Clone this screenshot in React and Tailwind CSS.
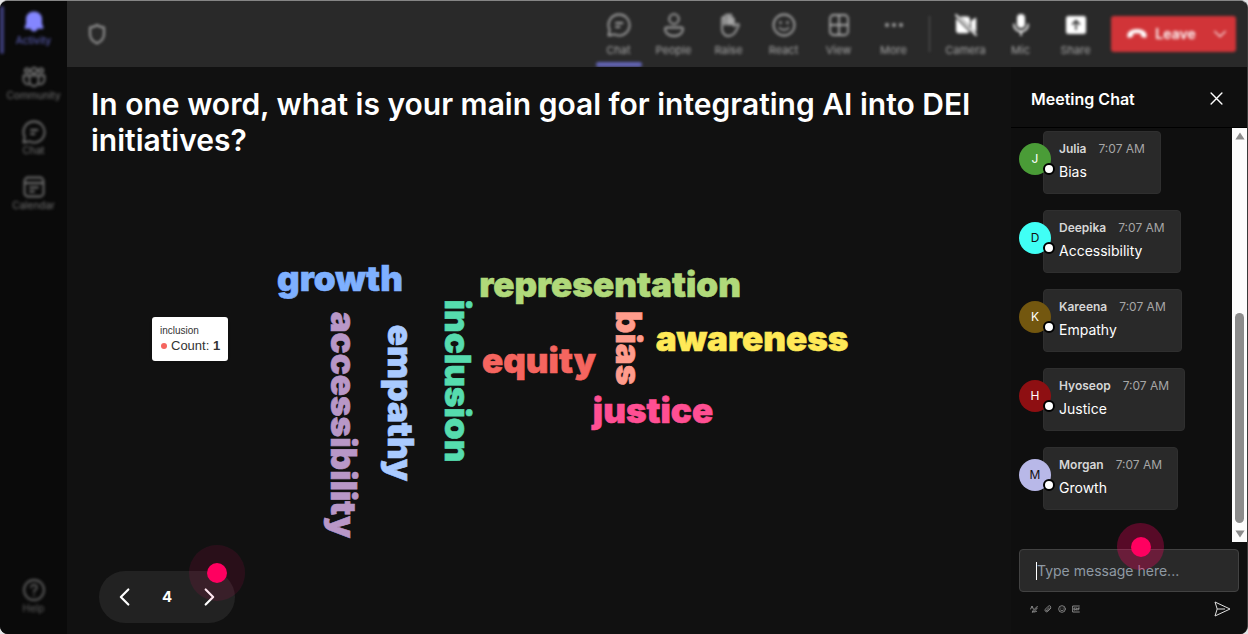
import React from "react";

function Icon({ size = "size-6", label, children }) {
  return (
    <svg
      viewBox="0 0 24 24"
      className={`${size} shrink-0`}
      fill="none"
      stroke="currentColor"
      strokeWidth="1.8"
      strokeLinecap="round"
      strokeLinejoin="round"
      aria-hidden={label ? undefined : true}
      aria-label={label}
    >
      {children}
    </svg>
  );
}

const BellIcon = () => (
  <Icon>
    <path
      fill="currentColor"
      stroke="none"
      d="M12 1.5c-4.600 0-8 3.300-8 7.600v4.600l-1.400 3.500c-.3.8.2 1.500 1 1.500h4.900a3.600 3.600 0 0 0 7 0h4.900c.8 0 1.300-.7 1-1.500L20 13.700V9.100c0-4.300-3.400-7.600-8-7.600z"
    />
  </Icon>
);

const CommunityIcon = () => (
  <Icon>
    <circle cx="12" cy="5.500" r="2.800" />
    <circle cx="5" cy="5.500" r="2.200" />
    <circle cx="19" cy="5.500" r="2.200" />
    <path d="M7.500 10.500h9v6a4.500 4.500 0 0 1-9 0z" />
    <path d="M7 10.500H1.500V15a4.500 4.500 0 0 0 6 4M17 10.500h5.500V15a4.500 4.500 0 0 1-6 4" />
  </Icon>
);

const ChatIcon = () => (
  <Icon>
    <path d="M12 1.500a10.500 10.500 0 1 1-4.800 19.800L1.500 22.500l1.200-5.600A10.500 10.500 0 0 1 12 1.500z" />
    <path d="M9 10h6.500M9 14h3.500" />
  </Icon>
);

const CalendarIcon = () => (
  <Icon>
    <rect x="2.500" y="2.500" width="19" height="19" rx="3.500" />
    <path d="M3 8h18M8 12.500h8M8 16.500h4" />
  </Icon>
);

const HelpIcon = () => (
  <Icon>
    <circle cx="12" cy="12" r="10" />
    <path d="M9.200 9.300a2.800 2.800 0 1 1 4.200 2.500c-.9.600-1.400 1.100-1.400 2.200M12 17.200v.1" />
  </Icon>
);

const PeopleIcon = () => (
  <Icon>
    <circle cx="12" cy="6" r="4.800" />
    <path d="M4.500 14.500h15A1.500 1.500 0 0 1 21 16c0 4-3.500 7-9 7s-9-3-9-7a1.500 1.500 0 0 1 1.500-1.500z" />
  </Icon>
);

const HandIcon = () => (
  <Icon>
    <path d="M5 13V5.500a1.500 1.500 0 0 1 3 0V3.500a1.500 1.500 0 0 1 3.500 0V3a1.500 1.500 0 0 1 3 0v2.500a1.500 1.500 0 0 1 2.500 1V13l3-1.800c1-.6 2.300.4 1.700 1.500C19.500 17 17.500 23 11.500 23 7.500 23 5 19.500 5 16z" />
    <path d="M8 5v6M11.500 4v7M14.500 5v6" strokeWidth="3" />
  </Icon>
);

const ReactIcon = () => (
  <Icon>
    <circle cx="12" cy="12" r="10.500" />
    <path d="M8.500 9.500v.2M15.500 9.500v.2" strokeWidth="2.600" />
    <path d="M7.500 15c2.200 2.400 6.800 2.400 9 0" />
  </Icon>
);

const ViewIcon = () => (
  <Icon>
    <rect x="3" y="2" width="18" height="20" rx="3.500" />
    <path d="M12 2v20M3 12h18" />
  </Icon>
);

const MoreIcon = () => (
  <Icon>
    <g fill="currentColor" stroke="none">
      <circle cx="5" cy="12" r="2" />
      <circle cx="12" cy="12" r="2" />
      <circle cx="19" cy="12" r="2" />
    </g>
  </Icon>
);

const CameraOffIcon = () => (
  <Icon>
    <path
      fill="currentColor"
      stroke="none"
      d="M5.800 3.500H13a3 3 0 0 1 3 3v7.200L5.800 3.500zM2 5.300 15.500 18.800c-.6.900-1.500 1.400-2.500 1.400H5a3 3 0 0 1-3-3zM17 8l4-3c.5-.4 1.200 0 1.200.6v12.800c0 .5-.5.8-1 .6L17 15z"
    />
    <path d="m2 2 20 20" />
  </Icon>
);

const MicIcon = () => (
  <Icon>
    <rect x="8" y="1" width="8" height="14" rx="4" fill="currentColor" stroke="none" />
    <path d="M5 11.500a7 7 0 0 0 14 0M12 18.500V22" />
  </Icon>
);

const ShareIcon = () => (
  <Icon>
    <path
      fillRule="evenodd"
      fill="currentColor"
      stroke="none"
      d="M4.500 3h15A2.500 2.500 0 0 1 22 5.500v13a2.500 2.500 0 0 1-2.500 2.500h-15A2.500 2.500 0 0 1 2 18.500v-13A2.500 2.500 0 0 1 4.500 3zM12 6.500 7.500 11l1.200 1.200L11.200 9.800V17h1.600V9.800l2.500 2.400 1.200-1.200z"
    />
  </Icon>
);

const sideItems = [
  { label: "Activity", icon: BellIcon, active: true },
  { label: "Community", icon: CommunityIcon },
  { label: "Chat", icon: ChatIcon },
  { label: "Calendar", icon: CalendarIcon },
];

const tools = [
  { label: "Chat", icon: ChatIcon, active: true },
  { label: "People", icon: PeopleIcon },
  { label: "Raise", icon: HandIcon },
  { label: "React", icon: ReactIcon },
  { label: "View", icon: ViewIcon },
  { label: "More", icon: MoreIcon },
];

const devices = [
  { label: "Camera", icon: CameraOffIcon },
  { label: "Mic", icon: MicIcon },
  { label: "Share", icon: ShareIcon },
];

function SideButton({ label, icon: Glyph, active }) {
  return (
    <button
      type="button"
      className={`flex h-[55px] w-full flex-col items-center text-[10px] leading-[12px] ${
        active ? "text-[#6266c4]" : "text-[#747474]"
      }`}
    >
      <span className={active ? "text-[#8486ff]" : ""}>
        <Glyph />
      </span>
      {label}
    </button>
  );
}

function ToolButton({ label, icon: Glyph, active, bright }) {
  return (
    <button
      type="button"
      className="flex h-full w-[55px] flex-col items-center pt-3 text-[11px] leading-[14px] text-[#a6a6a6]"
    >
      <span className={bright ? "text-white" : ""}>
        <Glyph />
      </span>
      <span className="mt-[6px]">{label}</span>
      {active && <span className="mt-auto h-[5px] w-[46px] rounded-sm bg-[#6264b4]" />}
    </button>
  );
}

function Sidebar() {
  return (
    <nav className="w-[67px] shrink-0 bg-[#0a0a0a]">
      <div className="flex h-full flex-col pt-[9px] pb-5 blur-[0.1rem]">
        <div className="relative">
          <span className="absolute -top-1 left-0 h-12 w-1 rounded-sm bg-[#3c3d78]" />
          {sideItems.map((item) => (
            <SideButton key={item.label} {...item} />
          ))}
        </div>
        <button
          type="button"
          className="mt-auto flex flex-col items-center text-[10px] leading-[12px] text-[#606060]"
        >
          <HelpIcon />
          Help
        </button>
      </div>
    </nav>
  );
}

function TopBar() {
  return (
    <header className="h-[66px] shrink-0 bg-[#292929]">
      <div className="flex h-full items-center pr-[11px] pl-[18px] blur-[0.1rem]">
        <span className="text-[#a6a6a6]">
          <Icon label="Protected meeting">
            <path d="M12 3c2 1.600 4.500 2.300 7 2.300V12c0 4.500-2.700 7.500-7 9.300C7.700 19.500 5 16.500 5 12V5.300C7.500 5.300 10 4.600 12 3z" />
          </Icon>
        </span>
        <div className="ml-auto flex h-full items-center">
          {tools.map((t) => (
            <ToolButton key={t.label} {...t} />
          ))}
          <span className="mx-2 h-9 w-px bg-[#5c5c5c]" />
          {devices.map((t) => (
            <ToolButton key={t.label} {...t} bright />
          ))}
          <div className="ml-2 flex h-9 w-[125px] items-center rounded-[3px] bg-[#d13438] text-white">
            <button
              type="button"
              className="flex flex-1 items-center justify-center gap-2 pl-2 text-sm font-semibold"
            >
              <svg viewBox="0 0 20 10" className="h-[10px] w-5" fill="currentColor" aria-hidden="true">
                <path d="M10 0C4 0 0 3 .3 7c.1 1.500 1 2 2.200 1.700l2.300-.6c.9-.2 1.300-.8 1.300-1.700V4.800c2.500-.8 5.300-.8 7.800 0v1.600c0 .9.400 1.500 1.300 1.700l2.300.6c1.200.3 2.100-.2 2.200-1.700C20 3 16 0 10 0z" />
              </svg>
              Leave
            </button>
            <button type="button" aria-label="Leave options" className="px-2">
              <Icon size="size-4">
                <path d="m4 8 8 8 8-8" />
              </Icon>
            </button>
          </div>
        </div>
      </div>
    </header>
  );
}

const words = [
  { text: "growth", x: 340, y: 290, fill: "#7eb0ff" },
  { text: "representation", x: 610, y: 296, fill: "#b0d97a" },
  { text: "awareness", x: 752, y: 350, fill: "#ffe957" },
  { text: "equity", x: 539, y: 372, fill: "#f5655f" },
  { text: "justice", x: 653, y: 422, fill: "#ff4f93" },
  { text: "accessibility", x: 331, y: 424, fill: "#b897c7", turned: true },
  { text: "empathy", x: 388, y: 402, fill: "#a9caff", turned: true },
  { text: "inclusion", x: 445, y: 380, fill: "#56dcae", turned: true },
  { text: "bias", x: 616, y: 347, fill: "#ff9c8c", turned: true },
];

function WordCloud() {
  return (
    <svg
      viewBox="67 157 944 413"
      role="img"
      aria-label="Word cloud of answers"
      className="min-h-0 w-full flex-1 font-['Arial_Black','Inter',sans-serif] text-[35px] font-black"
    >
      {words.map((w) => (
        <text
          key={w.text}
          textAnchor="middle"
          fill={w.fill}
          stroke={w.fill}
          strokeWidth="0.6"
          transform={`translate(${w.x} ${w.y})${w.turned ? " rotate(90)" : ""}`}
        >
          {w.text}
        </text>
      ))}
    </svg>
  );
}

function Pointer({ place, halo }) {
  return (
    <span className={`pointer-events-none absolute flex items-center justify-center rounded-full ${place} ${halo}`}>
      <span className="size-5 rounded-full bg-[#ff0060]" />
    </span>
  );
}

function Poll() {
  return (
    <main className="relative flex min-w-0 flex-1 flex-col bg-[#111111]">
      <h1 className="px-6 pt-[19px] text-[30px] leading-9 font-semibold text-white">
        In one word, what is your main goal for integrating AI into DEI initiatives?
      </h1>
      <WordCloud />
      <div className="absolute top-[250px] left-[85px] rounded-[3px] bg-white px-2 py-[7px] font-['Liberation_Sans',sans-serif] text-[#333333] shadow">
        <div className="text-[10px] leading-[14px]">inclusion</div>
        <div className="flex items-center text-[13px] leading-4">
          <span className="mr-1 ml-px size-[6px] rounded-full bg-[#f5655f]" />
          <span>
            Count: <b>1</b>
          </span>
        </div>
      </div>
      <div className="relative mb-[11px] ml-8 flex h-[52px] w-[136px] items-center justify-between rounded-full bg-[#222222] px-4 text-white">
        <button type="button" aria-label="Previous question">
          <Icon size="size-5">
            <path d="m16 3-9 9 9 9" strokeWidth="2.600" />
          </Icon>
        </button>
        <span className="text-[15px] font-bold">4</span>
        <button type="button" aria-label="Next question">
          <Icon size="size-5">
            <path d="m8 3 9 9-9 9" strokeWidth="2.600" />
          </Icon>
        </button>
        <Pointer place="-top-[26px] -right-[10px]" halo="size-14 bg-[#ff0060]/10" />
      </div>
    </main>
  );
}

const messages = [
  { name: "Julia", text: "Bias", tone: "bg-[#4a9c37] text-white" },
  { name: "Deepika", text: "Accessibility", tone: "bg-[#40fff5] text-[#111111]" },
  { name: "Kareena", text: "Empathy", tone: "bg-[#73570f] text-white" },
  { name: "Hyoseop", text: "Justice", tone: "bg-[#8e0f12] text-white" },
  { name: "Morgan", text: "Growth", tone: "bg-[#b8b8e8] text-[#111111]" },
];

function Message({ name, text, tone }) {
  return (
    <li className="flex">
      <div className={`relative z-10 mt-3 flex size-8 items-center justify-center rounded-full text-xs ${tone}`}>
        {name[0]}
        <span className="absolute -right-1 bottom-0 size-3 rounded-full border-2 border-black bg-white" />
      </div>
      <div className="-ml-2 h-[63px] rounded border border-[#2f2f2f] bg-[#292929] px-[15px] pt-2">
        <div className="flex gap-3 text-xs leading-[18px] text-[#a6a6a6]">
          <span className="font-semibold text-[#d6d6d6]">{name}</span>
          <time>7:07 AM</time>
        </div>
        <p className="mt-1 text-sm leading-5 text-white">{text}</p>
      </div>
    </li>
  );
}

function ScrollTrack() {
  return (
    <div className="flex w-[15px] shrink-0 flex-col items-center bg-[#fcfcfc] py-1 text-[#8b8b8b]" aria-hidden="true">
      <svg viewBox="0 0 10 8" className="h-2 w-[10px]" fill="currentColor">
        <path d="M5 0.500 9.600 7.500H.4z" />
      </svg>
      <div className="flex w-[9px] flex-1 flex-col justify-end pb-[7px]">
        <div className="h-[210px] rounded-full bg-[#8b8b8b]" />
      </div>
      <svg viewBox="0 0 10 8" className="h-2 w-[10px]" fill="currentColor">
        <path d="M5 7.500.4.500h9.200z" />
      </svg>
    </div>
  );
}

function ChatPanel() {
  return (
    <aside className="flex w-[236px] shrink-0 flex-col bg-[#0f0f0f]">
      <div className="flex h-[61px] items-center justify-between border-b border-black pt-[3px] pr-6 pl-5">
        <h2 className="text-base font-semibold text-white">Meeting Chat</h2>
        <button type="button" aria-label="Close chat" className="text-white">
          <Icon size="size-[13px]">
            <path d="m2 2 20 20M22 2 2 22" strokeWidth="2.600" />
          </Icon>
        </button>
      </div>
      <div className="flex flex-1">
        <ul className="flex flex-1 flex-col gap-4 pt-[3px] pl-2">
          {messages.map((m) => (
            <Message key={m.name} {...m} />
          ))}
        </ul>
        <ScrollTrack />
      </div>
      <form className="px-2 pt-[7px]" onSubmit={(e) => e.preventDefault()}>
        <div className="relative flex h-[43px] items-center rounded border border-[#424242] bg-[#292929] pl-4">
          <span className="h-[18px] w-px shrink-0 bg-white" />
          <input
            type="text"
            aria-label="Message"
            placeholder="Type message here..."
            className="min-w-0 flex-1 bg-transparent text-sm text-white outline-none placeholder:text-[#8f99a3]"
          />
          <Pointer place="-top-[27px] left-[97px]" halo="size-[47px] bg-[#ff0060]/30" />
        </div>
        <div className="flex h-[42px] items-center gap-[6px] pr-2 pb-2 pl-[11px] text-[#9a9a9a]">
          <button type="button" aria-label="Format">
            <Icon size="size-2">
              <path d="M2 12 6 3l4 9M22 4 9 17l-2 5 5-2L22 9M13 21c3-3 4 1 7-2" strokeWidth="2.800" />
            </Icon>
          </button>
          <button type="button" aria-label="Attach">
            <Icon size="size-2">
              <path d="M20 10 11 19.500a5 5 0 0 1-7-7L13 3.500a4 4 0 0 1 6 6L10.500 18a1.500 1.500 0 0 1-3-3L15 8" strokeWidth="2.400" />
            </Icon>
          </button>
          <button type="button" aria-label="Emoji">
            <Icon size="size-2">
              <circle cx="12" cy="12" r="10" strokeWidth="2.400" />
              <path d="M8.500 9v.5M15.500 9v.5M7.500 15c2.500 2.500 6.500 2.500 9 0" strokeWidth="2.400" />
            </Icon>
          </button>
          <button type="button" aria-label="GIF">
            <Icon size="size-2">
              <path d="M22 3H2v18h20M10 9H6v6h4v-2M14 9v6M18 15V9h4M18 12h3" strokeWidth="2.600" />
            </Icon>
          </button>
          <button type="submit" aria-label="Send" className="ml-auto text-[#e0e0e0]">
            <svg viewBox="0 0 17 16" className="h-4 w-[17px]" fill="none" stroke="currentColor" strokeLinejoin="round" aria-hidden="true">
              <path d="M1 1 16 8 1 15l2.200-7zM3.200 8H11" />
            </svg>
          </button>
        </div>
      </form>
    </aside>
  );
}

export default function App() {
  return (
    <div className="flex min-h-screen bg-[#e4e4e6] pb-px font-['Inter',sans-serif]">
      <div className="flex flex-1 overflow-hidden rounded-lg border-t border-r border-t-[#858585] border-r-[#3a3a3a] bg-[#0a0a0a]">
        <Sidebar />
        <div className="flex min-w-0 flex-1 flex-col">
          <TopBar />
          <div className="flex flex-1">
            <Poll />
            <ChatPanel />
          </div>
        </div>
      </div>
    </div>
  );
}
